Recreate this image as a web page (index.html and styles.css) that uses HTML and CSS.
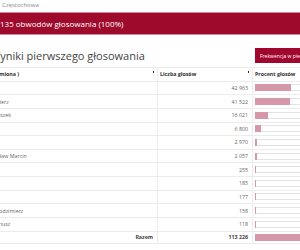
FILE: index.html
```html
<!DOCTYPE html>
<html lang="pl">
<head>
<meta charset="utf-8">
<title>Wyniki pierwszego głosowania – Częstochowa</title>
<link rel="stylesheet" href="styles.css">
</head>
<body>
<div class="crumb">Częstochowa</div>
<div class="banner">135 obwodów głosowania (100%)</div>
<div class="page">
  <div class="titlebar">
    <h1 class="title">Wyniki pierwszego głosowania</h1>
    <button class="btn">Frekwencja w pierwszym głosowaniu</button>
  </div>
  <div class="table">
    <div class="row head">
      <div class="cell sort">Kandydat (nazwisko i imiona )</div>
      <div class="cell sort">Liczba głosów</div>
      <div class="cell">Procent głosów</div>
    </div>
    <div class="row"><div class="cell">Duda Andrzej Sebastian</div><div class="cell num">42 963</div><div class="cell"><div class="track"><div class="fill" style="width:37.94%"></div></div></div></div>
    <div class="row"><div class="cell">Trzaskowski Rafał Kazimierz</div><div class="cell num">41 522</div><div class="cell"><div class="track"><div class="fill" style="width:36.67%"></div></div></div></div>
    <div class="row"><div class="cell">Hołownia Szymon Franciszek</div><div class="cell num">16 021</div><div class="cell"><div class="track"><div class="fill" style="width:14.15%"></div></div></div></div>
    <div class="row"><div class="cell">Bosak Krzysztof</div><div class="cell num">6 800</div><div class="cell"><div class="track"><div class="fill" style="width:6.01%"></div></div></div></div>
    <div class="row"><div class="cell">Biedroń Robert</div><div class="cell num">2 970</div><div class="cell"><div class="track"><div class="fill" style="width:2.62%"></div></div></div></div>
    <div class="row"><div class="cell">Kosiniak-Kamysz Władysław Marcin</div><div class="cell num">2 057</div><div class="cell"><div class="track"><div class="fill" style="width:1.82%"></div></div></div></div>
    <div class="row"><div class="cell">Żółtek Stanisław Józef</div><div class="cell num">255</div><div class="cell"><div class="track"><div class="fill" style="width:0.23%"></div></div></div></div>
    <div class="row"><div class="cell">Jakubiak Marek</div><div class="cell num">185</div><div class="cell"><div class="track"><div class="fill" style="width:0.16%"></div></div></div></div>
    <div class="row"><div class="cell">Tanajno Paweł Jan</div><div class="cell num">177</div><div class="cell"><div class="track"><div class="fill" style="width:0.16%"></div></div></div></div>
    <div class="row"><div class="cell">Witkowski Waldemar Włodzimierz</div><div class="cell num">158</div><div class="cell"><div class="track"><div class="fill" style="width:0.14%"></div></div></div></div>
    <div class="row"><div class="cell">Piotrowski Mirosław Mariusz</div><div class="cell num">118</div><div class="cell"><div class="track"><div class="fill" style="width:0.10%"></div></div></div></div>
    <div class="row total">
      <div class="cell num">Razem</div>
      <div class="cell num">113 226</div>
      <div class="cell"><div class="track"><div class="fill" style="width:100%"></div></div></div>
    </div>
  </div>
</div>
</body>
</html>
```
FILE: styles.css
```css
html, body {
  margin: 0;
  padding: 0;
  background: #fff;
}
body {
  width: 300px;
  height: 250px;
  overflow: hidden;
  font-family: "Open Sans", "DejaVu Sans", sans-serif;
  color: #555;
}
.crumb {
  height: 12px;
  padding-left: 2px;
  font-size: 6px;
  line-height: 10px;
  color: #888;
  white-space: nowrap;
}
.banner {
  height: 21px;
  background: #9e0a2c;
  border-top: 1px solid #d5899c;
  border-bottom: 1px solid #d5899c;
  color: #fff;
  font-size: 8px;
  line-height: 21px;
  white-space: nowrap;
}
.page {
  margin-left: -63px;
  width: 423px;
}
.titlebar {
  display: grid;
  grid-template-columns: 1fr 108px;
  align-items: center;
  margin-top: 13px;
  height: 15px;
}
.title {
  margin: 0;
  padding-left: 53px;
  font-size: 11px;
  font-weight: 400;
  line-height: 15px;
  color: #444;
  white-space: nowrap;
}
.btn {
  display: block;
  margin: 0 0 0 3px;
  height: 15px;
  padding: 0 5px;
  border: 0;
  background: #a0062e;
  color: #fff;
  font-family: "Open Sans", sans-serif;
  font-size: 5px;
  text-align: left;
  white-space: nowrap;
  overflow: hidden;
}
.table {
  margin-top: 4px;
}
.row {
  display: grid;
  grid-template-columns: 220px 95px 108px;
  height: 13.64px;
  box-sizing: border-box;
  border-top: 1px solid #ececec;
  font-size: 5.3px;
  color: #666;
}
.row.total {
  border-bottom: 1px solid #ececec;
  font-weight: 700;
  color: #444;
}
.row.head {
  font-weight: 700;
  color: #333;
}
.cell {
  position: relative;
  display: flex;
  align-items: center;
  padding: 0 4px 0 2px;
  border-left: 1px solid #ececec;
  white-space: nowrap;
  overflow: hidden;
}
.num {
  justify-content: flex-end;
}
.sort::after {
  content: "";
  position: absolute;
  right: 3px;
  top: 3px;
  width: 1.5px;
  height: 1.5px;
  background: #333;
}
.track {
  width: 97px;
  height: 7px;
  box-sizing: border-box;
  border: 1px solid #e3e3e3;
  background: #fff;
}
.fill {
  height: 7px;
  margin: -1px;
  background: #d697a8;
}
```
